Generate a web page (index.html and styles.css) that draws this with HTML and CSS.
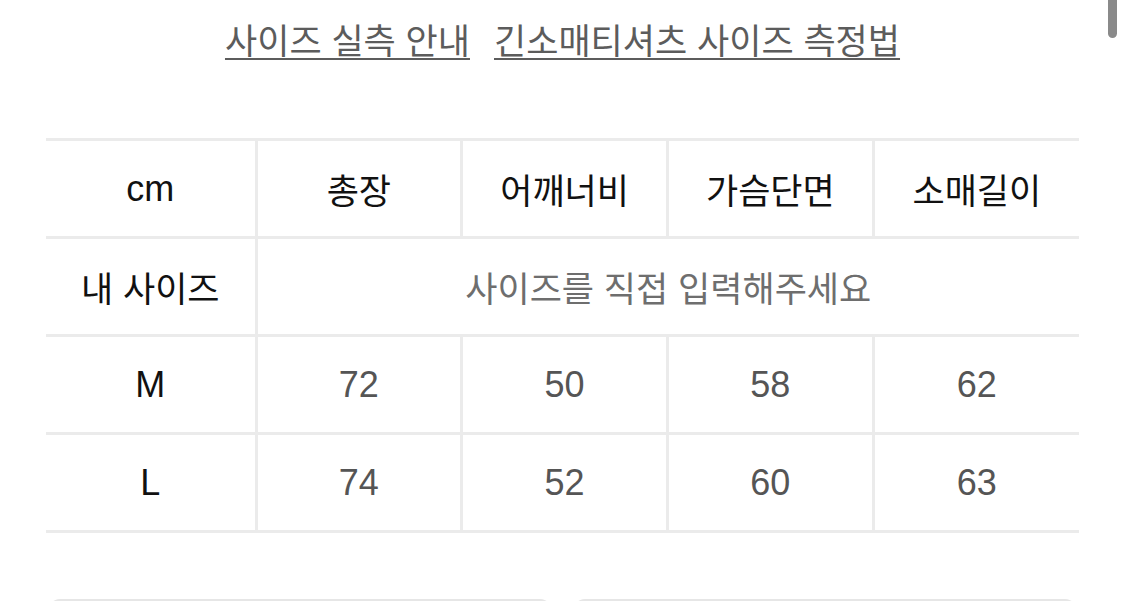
FILE: index.html
```html
<!DOCTYPE html>
<html lang="ko">
<head>
<meta charset="utf-8">
<title>사이즈 실측 안내</title>
<link rel="stylesheet" href="styles.css">
</head>
<body>
<div class="page">
  <nav class="guide-links">
    <a class="guide-link" href="#">사이즈 실측 안내</a>
    <a class="guide-link" href="#">긴소매티셔츠 사이즈 측정법</a>
  </nav>

  <table class="size-table">
    <colgroup>
      <col class="col-label">
      <col><col><col><col>
    </colgroup>
    <tr class="row-head">
      <td class="cell-label latin">cm</td>
      <td class="cell-head">총장</td>
      <td class="cell-head">어깨너비</td>
      <td class="cell-head">가슴단면</td>
      <td class="cell-head">소매길이</td>
    </tr>
    <tr>
      <td class="cell-label ko">내 사이즈</td>
      <td class="cell-input" colspan="4">사이즈를 직접 입력해주세요</td>
    </tr>
    <tr>
      <td class="cell-label latin">M</td>
      <td class="cell-num">72</td>
      <td class="cell-num">50</td>
      <td class="cell-num">58</td>
      <td class="cell-num">62</td>
    </tr>
    <tr>
      <td class="cell-label latin">L</td>
      <td class="cell-num">74</td>
      <td class="cell-num">52</td>
      <td class="cell-num">60</td>
      <td class="cell-num">63</td>
    </tr>
  </table>

  <div class="actions">
    <button class="action-btn" type="button"></button>
    <button class="action-btn" type="button"></button>
  </div>
</div>
<div class="scroll-thumb"></div>
</body>
</html>
```

FILE: styles.css
```css
html, body {
  margin: 0;
  padding: 0;
  background: #ffffff;
}

body {
  font-family: "Liberation Sans", "Noto Sans CJK KR", sans-serif;
  overflow: hidden;
}

.page {
  padding: 15px 46px 0 46px;
}

.guide-links {
  display: flex;
  justify-content: center;
  gap: 24px;
  height: 48px;
  line-height: 48px;
}

.guide-link {
  font-family: "Noto Sans CJK KR", sans-serif;
  font-size: 35px;
  color: #5c5c5c;
  text-decoration: underline;
  text-decoration-thickness: 2px;
  text-underline-offset: 4px;
}

.size-table {
  width: 100%;
  margin-top: 75px;
  border-collapse: collapse;
  table-layout: fixed;
}

.col-label {
  width: 210px;
}

.size-table tr {
  height: 98px;
}

.size-table td {
  padding: 0;
  text-align: center;
  vertical-align: middle;
  border: 3px solid #ebebeb;
}

.size-table td:first-child {
  border-left: none;
}

.size-table td:last-child {
  border-right: none;
}

.latin {
  font-family: "Liberation Sans", sans-serif;
  font-size: 36px;
  color: #111111;
  padding-bottom: 2px;
}

.ko,
.cell-head,
.cell-input {
  font-family: "Noto Sans CJK KR", sans-serif;
  font-size: 35px;
  font-weight: 400;
  line-height: 1;
  padding-bottom: 10px;
}

.ko,
.cell-head {
  color: #111111;
}

.cell-input {
  color: #6e6e6e;
}

.cell-num {
  font-family: "Liberation Sans", sans-serif;
  font-size: 36px;
  color: #555555;
  padding-bottom: 4px;
}

.actions {
  display: grid;
  grid-template-columns: 1fr 1fr;
  gap: 21px;
  margin-top: 66px;
  padding: 0 2px;
}

.action-btn {
  height: 64px;
  background: #ffffff;
  border: 2px solid #e6e6e6;
  border-radius: 12px;
}

.scroll-thumb {
  position: fixed;
  top: 0;
  right: 8px;
  width: 9px;
  height: 38px;
  border-radius: 0 0 5px 5px;
  background: #8a8a8a;
}
```
